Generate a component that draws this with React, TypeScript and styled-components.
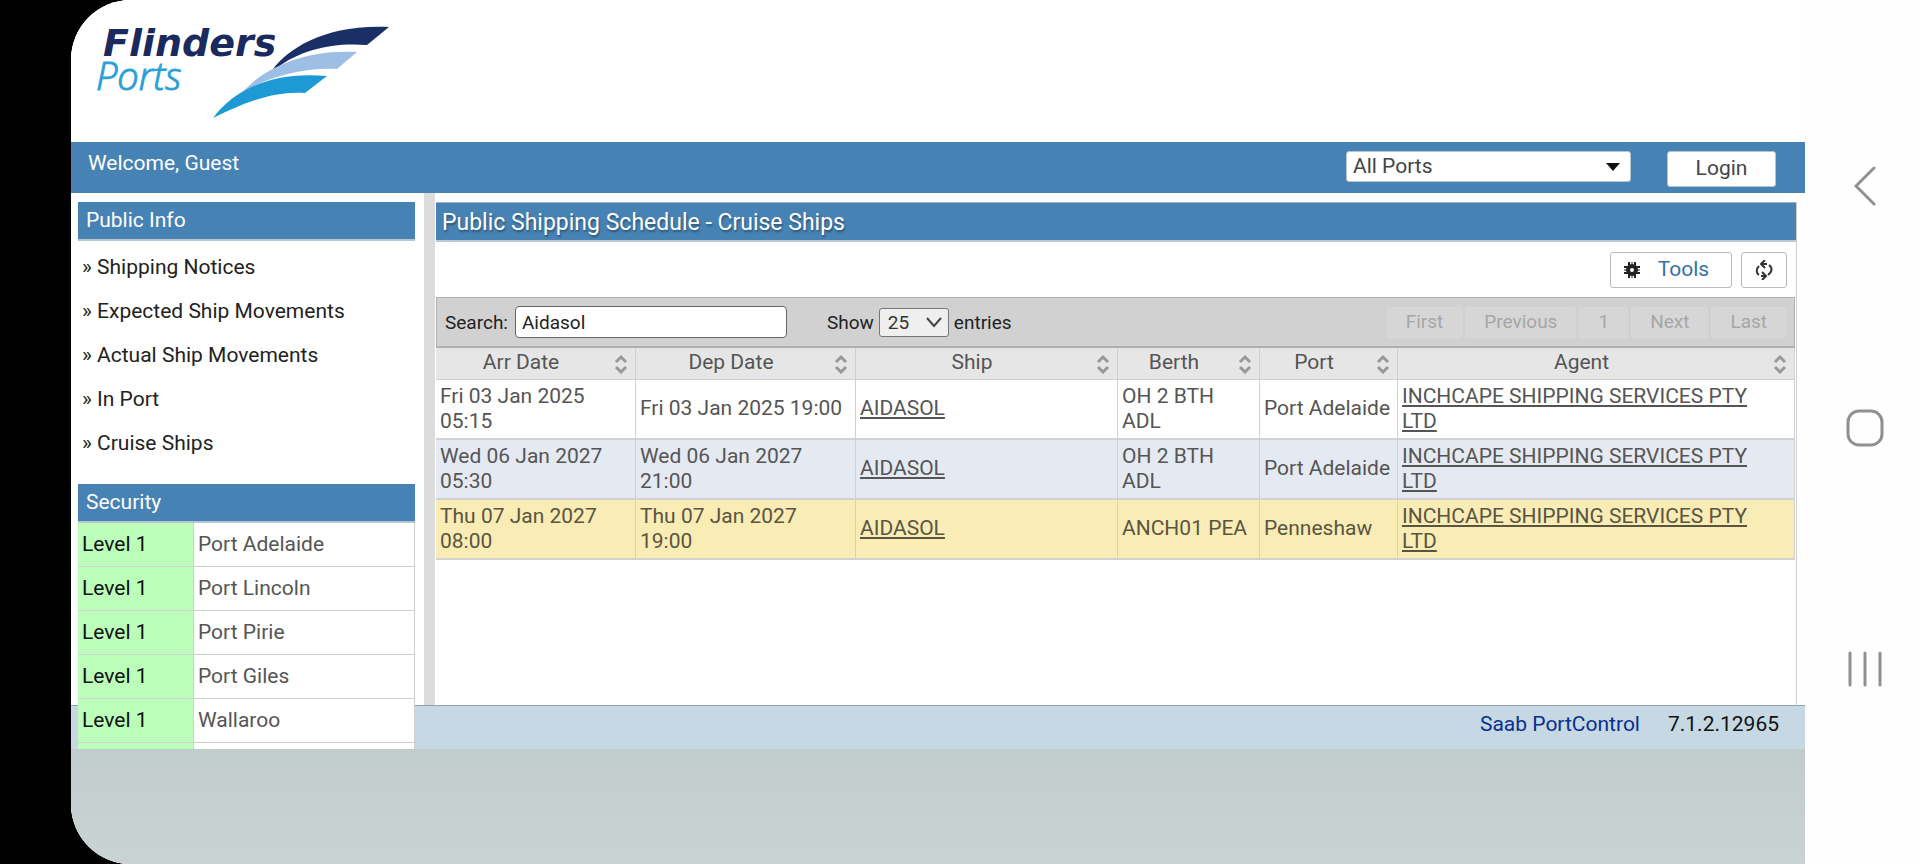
import React from 'react';
import styled, { createGlobalStyle } from 'styled-components';

const BLUE = '#4682b4';
const LINE = '#d0d0d0';

const GlobalStyle = createGlobalStyle`
  *, *::before, *::after { box-sizing: border-box; }
  body {
    margin: 0;
    background: #000;
    font-family: Roboto, "Liberation Sans", sans-serif;
    font-size: 21px;
    line-height: 25px;
    color: #222;
  }
  button, input, select { font: inherit; color: inherit; margin: 0; }
  h1, h2 { margin: 0; font-size: inherit; font-weight: 400; }
  a { color: inherit; }
`;

const Device = styled.div`
  display: flex;
  height: 100vh;
  padding-left: 71px;
  background: #000;
`;

const Screen = styled.div`
  flex: 1;
  min-width: 0;
  display: flex;
  background: #fefefe;
  border-radius: 60px 0 0 60px;
  overflow: hidden;
`;

const Page = styled.div`
  flex: 1;
  min-width: 0;
  display: flex;
  flex-direction: column;
  background: linear-gradient(#c1cccc, #cad3d3) bottom / 100% 115px no-repeat #fff;
`;

const Brand = styled.header`
  height: 142px;
  background: #fff;
`;

const LogoSvg = styled.svg`
  display: block;
`;

const TopBar = styled.div`
  display: flex;
  align-items: flex-start;
  height: 51px;
  padding: 9px 29px 0 17px;
  background: ${BLUE};
  color: #fff;
`;

const Welcome = styled.span`
  flex: 1;
`;

const SelectWrap = styled.span`
  position: relative;
  display: inline-flex;
  color: #333;
  svg { position: absolute; pointer-events: none; }
`;

const PortSelect = styled.select`
  appearance: none;
  width: 285px;
  height: 31px;
  padding: 0 6px;
  border: 1px solid #b8c4cc;
  border-radius: 3px;
  background: #fff;
  color: #444;
`;

const PortArrow = styled.svg`
  right: 11px;
  top: 11px;
`;

const LoginButton = styled.button`
  width: 109px;
  height: 36px;
  margin-left: 36px;
  padding: 0 0 2px;
  border: 1px solid #b8c4cc;
  border-radius: 3px;
  background: #fff;
  color: #444;
`;

const Workspace = styled.div`
  flex: 1;
  min-height: 0;
  display: grid;
  grid-template-columns: 353px 11px minmax(0, 1fr);
  grid-template-rows: minmax(0, 1fr) 44px;
  background: #fff;
  margin-bottom: 115px;
`;

const Sidebar = styled.aside`
  grid-column: 1;
  grid-row: 1 / 3;
  z-index: 1;
  min-height: 0;
  overflow: hidden;
  margin: 9px 9px 0 7px;
`;

const Splitter = styled.div`
  grid-column: 2;
  grid-row: 1;
  background: #dcdcdc;
`;

const SideTitle = styled.h2`
  height: 39px;
  padding: 6px 8px 0;
  border-bottom: 2px solid #b9c6d1;
  background: ${BLUE};
  color: #fff;
`;

const Menu = styled.ul`
  margin: 0;
  padding: 5px 0 18px;
  list-style: none;
`;

const MenuItem = styled.li`
  height: 44px;
  padding: 9px 4px;
  a { text-decoration: none; }
`;

const SecurityTable = styled.table`
  width: 100%;
  border-collapse: separate;
  border-spacing: 0;
  table-layout: fixed;
  background: #fff;
`;

const SecurityCell = styled.td<{ $level?: boolean }>`
  width: ${p => (p.$level ? '116px' : 'auto')};
  height: 44px;
  padding: 0 4px;
  border-right: 1px solid ${LINE};
  border-bottom: 1px solid ${LINE};
  background: ${p => (p.$level ? '#bbffbb' : '#fff')};
  color: ${p => (p.$level ? '#111' : '#555')};
`;

const Panel = styled.main`
  grid-column: 3;
  grid-row: 1;
  margin: 9px 8px 0 1px;
  border-right: 1px solid ${LINE};
  min-width: 0;
`;

const PanelTitle = styled.h1`
  height: 40px;
  padding: 7px 6px 5px;
  border-top: 1px solid #9fb0bd;
  border-bottom: 2px solid #c0c8d0;
  background: ${BLUE};
  color: #fff;
  font-size: 23px;
  text-shadow: 1px 2px 2px rgba(0, 0, 0, 0.35);
`;

const Actions = styled.div`
  display: flex;
  justify-content: flex-end;
  gap: 9px;
  height: 55px;
  padding: 10px 9px;
`;

const ActionButton = styled.button<{ $width: number }>`
  display: flex;
  align-items: center;
  justify-content: center;
  gap: 18px;
  width: ${p => p.$width}px;
  height: 36px;
  padding: 0;
  border: 1px solid #bbb;
  border-radius: 3px;
  background: #fff;
  color: #3572a5;
`;

const ToolsLabel = styled.span`
  padding: 0 9px 2px 0;
`;

const FilterBar = styled.div`
  display: flex;
  align-items: center;
  height: 51px;
  margin-right: 1px;
  padding: 0 8px;
  border: 2px solid #b0b0b0;
  border-width: 1px 1px 2px;
  background: #d1d1d1;
  font-size: 19px;
`;

const Field = styled.label`
  display: flex;
  align-items: center;
  gap: 5px;
  margin-right: 40px;
`;

const SearchInput = styled.input`
  width: 272px;
  height: 32px;
  margin-left: 2px;
  padding: 0 6px;
  border: 1px solid #666;
  border-radius: 4px;
  background: #fff;
`;

const CountSelect = styled.select`
  appearance: none;
  width: 70px;
  height: 29px;
  padding: 0 8px;
  border: 1px solid #777;
  border-radius: 3px;
  background: #efefef;
`;

const CountArrow = styled.svg`
  right: 7px;
  top: 9px;
`;

const Pager = styled.nav`
  display: flex;
  gap: 3px;
  margin-left: auto;
`;

const PageButton = styled.button`
  height: 31px;
  padding: 0 18px 2px;
  border: 1px solid #d8d8d8;
  border-radius: 2px;
  background: #d6d6d6;
  &:disabled { color: #a6a6a6; }
`;

const Schedule = styled.table`
  width: calc(100% - 1px);
  border-collapse: separate;
  border-spacing: 0;
  table-layout: fixed;
  color: #555;
`;

const HeadCell = styled.th`
  height: 32px;
  padding: 0;
  border-right: 1px solid ${LINE};
  border-bottom: 1px solid ${LINE};
  background: #e6e6e6;
  font-weight: 400;
`;

const SortLabel = styled.span`
  display: flex;
  align-items: center;
  gap: 8px;
  padding-right: 7px;
  span { flex: 1; padding-bottom: 2px; text-align: center; }
`;

const Row = styled.tr<{ $bg: string; $ink: string }>`
  background: ${p => p.$bg};
  color: ${p => p.$ink};
`;

const Cell = styled.td`
  height: 60px;
  padding: 0 4px 1px;
  border-right: 1px solid ${LINE};
  border-bottom: 2px solid #d2d2d2;
  &:last-child { padding-right: 16px; }
  a { text-underline-offset: 2px; text-decoration-thickness: 2px; }
`;

const Footer = styled.footer`
  grid-column: 1 / -1;
  grid-row: 2;
  display: flex;
  justify-content: flex-end;
  gap: 28px;
  padding: 6px 26px;
  border-top: 1px solid #8fa3ad;
  background: #c5d8e4;
  color: #111;
  a { color: #0a2f8f; text-decoration: none; }
`;

const NavRail = styled.nav`
  width: 115px;
  display: flex;
  flex-direction: column;
  align-items: center;
  justify-content: space-around;
  padding: 64px 0 75px 4px;
`;

const NavButton = styled.button`
  display: flex;
  padding: 0;
  border: 0;
  background: none;
`;

const Logo = () => (
  <LogoSvg width="340" height="142" viewBox="71 0 340 142" role="img" aria-label="Flinders Ports">
    <text x="103" y="56" fontFamily="DejaVu Sans, sans-serif" fontSize="38" fontWeight="700" fontStyle="italic" fill="#1a2a5e">Flinders</text>
    <text x="96" y="90" fontFamily="Open Sans, Noto Sans, sans-serif" fontSize="38" fontWeight="300" fontStyle="italic" fill="#2b9fd6" stroke="#2b9fd6" strokeWidth="1">Ports</text>
    <path d="M273 69 C289 48 326 24 389 27 L367 45 C334 42 300 50 278 67 Z" fill="#1a2f66" />
    <path d="M243 92 C263 69 303 49 357 52 L337 69 C304 67 268 77 243 92Z" fill="#9dbfe6" />
    <path d="M213 118 C233 91 270 71 327 76 L305 93 C275 91 247 101 213 118Z" fill="#1d9ad6" />
  </LogoSvg>
);

const SortIcon = () => (
  <svg width="14" height="20" viewBox="0 0 14 20" fill="none" stroke="#999" strokeWidth="3">
    <path d="M2 8 L7 3 L12 8 M2 13 L7 18 L12 13" />
  </svg>
);

const GearIcon = () => (
  <svg width="16" height="16" viewBox="0 0 16 16" fill="none" stroke="#222">
    <circle cx="8" cy="8" r="4" strokeWidth="4" />
    <path d="M5 0V16M11 0V16M0 5H16M0 11H16" strokeWidth="2" />
    <path d="M8 0V5M8 11V16M0 8H5M11 8H16" strokeWidth="1" />
  </svg>
);

const RefreshIcon = () => (
  <svg width="18" height="20" viewBox="0 0 18 20" fill="none" stroke="#333" strokeWidth="2">
    <path d="M4 6 C1 9 1 13 4 15 M6 16 H11 M13 15 C17 12 18 8 14 5 M12 4 H7" />
    <path d="M10 0 L6 4 L10 8 M7 12 L11 16 L7 20" />
  </svg>
);

const links = ['Shipping Notices', 'Expected Ship Movements', 'Actual Ship Movements', 'In Port', 'Cruise Ships'];
const ports = ['Port Adelaide', 'Port Lincoln', 'Port Pirie', 'Port Giles', 'Wallaroo', ''];
const columns = [
  { name: 'Arr Date', width: '200px' },
  { name: 'Dep Date', width: '220px' },
  { name: 'Ship', width: 'auto' },
  { name: 'Berth', width: '142px' },
  { name: 'Port', width: '138px' },
  { name: 'Agent', width: '397px' },
];
const agent = 'INCHCAPE SHIPPING SERVICES PTY LTD';
const visits = [
  { arr: 'Fri 03 Jan 2025 05:15', dep: 'Fri 03 Jan 2025 19:00', berth: 'OH 2 BTH ADL', port: 'Port Adelaide', bg: '#fff', ink: '#555' },
  { arr: 'Wed 06 Jan 2027 05:30', dep: 'Wed 06 Jan 2027 21:00', berth: 'OH 2 BTH ADL', port: 'Port Adelaide', bg: '#e5eaf2', ink: '#555' },
  { arr: 'Thu 07 Jan 2027 08:00', dep: 'Thu 07 Jan 2027 19:00', berth: 'ANCH01 PEA', port: 'Penneshaw', bg: '#f9ecb5', ink: '#5a5540' },
];

export default function App() {
  return (
    <Device>
      <GlobalStyle />
      <Screen>
        <Page>
          <Brand><Logo /></Brand>
          <TopBar>
            <Welcome>Welcome, Guest</Welcome>
            <SelectWrap>
              <PortSelect aria-label="Port"><option>All Ports</option></PortSelect>
              <PortArrow width="14" height="9" viewBox="0 0 14 9"><path d="M0 1H14L7 9Z" fill="#111" /></PortArrow>
            </SelectWrap>
            <LoginButton type="button">Login</LoginButton>
          </TopBar>
          <Workspace>
            <Sidebar>
              <SideTitle>Public Info</SideTitle>
              <Menu>
                {links.map(l => <MenuItem key={l}>» <a href="#">{l}</a></MenuItem>)}
              </Menu>
              <SideTitle>Security</SideTitle>
              <SecurityTable>
                <tbody>
                  {ports.map(p => (
                    <tr key={p}>
                      <SecurityCell $level>{p && 'Level 1'}</SecurityCell>
                      <SecurityCell>{p}</SecurityCell>
                    </tr>
                  ))}
                </tbody>
              </SecurityTable>
            </Sidebar>
            <Splitter />
            <Panel>
              <PanelTitle>Public Shipping Schedule - Cruise Ships</PanelTitle>
              <Actions>
                <ActionButton type="button" $width={122}><GearIcon /><ToolsLabel>Tools</ToolsLabel></ActionButton>
                <ActionButton type="button" $width={46} aria-label="Refresh"><RefreshIcon /></ActionButton>
              </Actions>
              <FilterBar>
                <Field>Search: <SearchInput type="text" defaultValue="Aidasol" /></Field>
                <Field>
                  Show
                  <SelectWrap>
                    <CountSelect><option>25</option></CountSelect>
                    <CountArrow width="16" height="11" viewBox="0 0 16 11" fill="none" stroke="#444" strokeWidth="2"><path d="M1 1L8 9L15 1" /></CountArrow>
                  </SelectWrap>
                  entries
                </Field>
                <Pager aria-label="Pages">
                  {['First', 'Previous', '1', 'Next', 'Last'].map(p => <PageButton key={p} type="button" disabled>{p}</PageButton>)}
                </Pager>
              </FilterBar>
              <Schedule>
                <colgroup>{columns.map(c => <col key={c.name} width={c.width} />)}</colgroup>
                <thead>
                  <tr>{columns.map(c => <HeadCell key={c.name} scope="col"><SortLabel><span>{c.name}</span><SortIcon /></SortLabel></HeadCell>)}</tr>
                </thead>
                <tbody>
                  {visits.map(v => (
                    <Row key={v.arr} $bg={v.bg} $ink={v.ink}>
                      <Cell>{v.arr}</Cell>
                      <Cell>{v.dep}</Cell>
                      <Cell><a href="#">AIDASOL</a></Cell>
                      <Cell>{v.berth}</Cell>
                      <Cell>{v.port}</Cell>
                      <Cell><a href="#">{agent}</a></Cell>
                    </Row>
                  ))}
                </tbody>
              </Schedule>
            </Panel>
            <Footer><a href="#">Saab PortControl</a><span>7.1.2.12965</span></Footer>
          </Workspace>
        </Page>
        <NavRail aria-label="System">
          <NavButton type="button" aria-label="Back">
            <svg width="22" height="40" viewBox="0 0 22 40" fill="none" stroke="#909090" strokeWidth="3" strokeLinecap="round"><path d="M20 2L2 20L20 38" /></svg>
          </NavButton>
          <NavButton type="button" aria-label="Home">
            <svg width="38" height="38" viewBox="0 0 38 38" fill="none" stroke="#909090" strokeWidth="3"><rect x="2" y="2" width="34" height="34" rx="11" /></svg>
          </NavButton>
          <NavButton type="button" aria-label="Recent apps">
            <svg width="34" height="36" viewBox="0 0 34 36" stroke="#909090" strokeWidth="3" strokeLinecap="round"><path d="M2 2V34M17 2V34M32 2V34" /></svg>
          </NavButton>
        </NavRail>
      </Screen>
    </Device>
  );
}
